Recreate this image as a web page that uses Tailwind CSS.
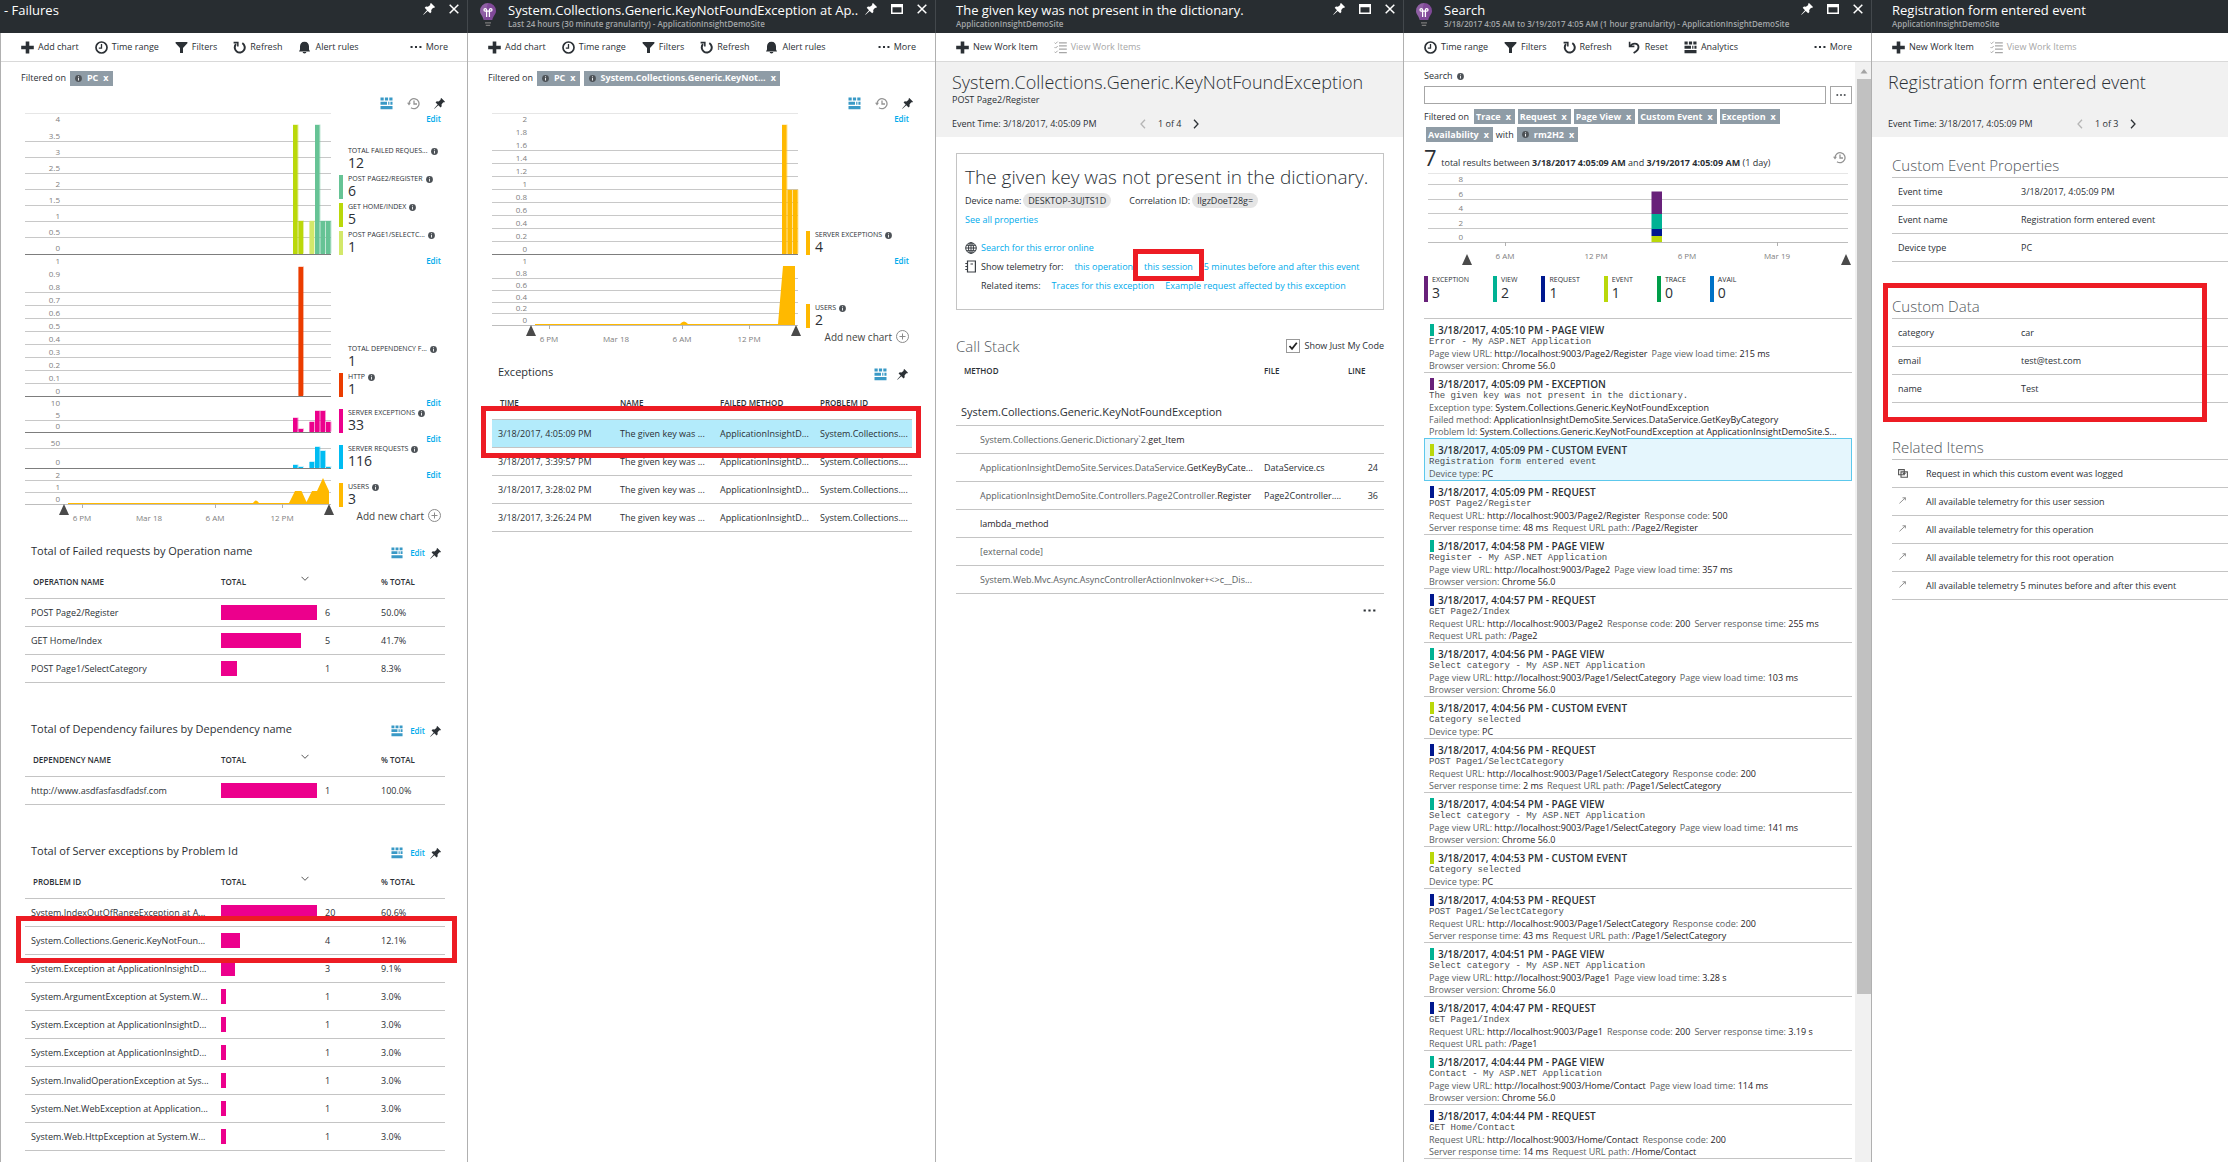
<!DOCTYPE html>
<html lang="en">
<head>
<meta charset="utf-8">
<title>Failures - ApplicationInsightDemoSite</title>
<script src="https://cdn.jsdelivr.net/npm/@tailwindcss/browser@4"></script>
</head>
<body class="bg-white font-['Open_Sans','Noto_Sans',sans-serif] text-[9px] leading-3 text-[#2b3035]">

<svg class="hidden" aria-hidden="true">
  <symbol id="pin" viewBox="0 0 12 12"><path fill="currentColor" d="M8 0L12 4L11 5L10.1 4.7L8.2 7.1L8.4 9L7.2 10.3L4.7 7.9L.6 11.8L.2 11.4L4 7.2L1.7 4.8L3 3.6L4.9 3.8L7.3 1.9L7 1Z"/></symbol>
  <symbol id="max" viewBox="0 0 12 10"><path fill="currentColor" fill-rule="evenodd" d="M0 0H12V10H0ZM1.5 3.2V8.5H10.5V3.2Z"/></symbol>
  <symbol id="close" viewBox="0 0 10 10"><path fill="none" stroke="currentColor" stroke-width="1.5" d="M.7 .7L9.3 9.3M9.3 .7L.7 9.3"/></symbol>
  <symbol id="bulb" viewBox="0 0 16 24"><path fill="#804998" d="M8 0a8 8 0 0 1 8 8c0 3.4-3 5-3.7 9H3.7C3 13 0 11.4 0 8a8 8 0 0 1 8-8z"/><path fill="#fff" fill-opacity=".12" d="M8 0a8 8 0 0 0-8 8c0 3.4 3 5 3.7 9z"/><path fill="none" stroke="#fff" stroke-width="1.3" d="M6.6 14V8.200M9.4 14V8.200M6.6 8.200H5.200a1.300 1.300 0 1 1 1.400-1.400zM9.4 8.200H10.800a1.300 1.300 0 1 0-1.400-1.400zM6.600 8.200H9.400"/><path fill="#7a7a7a" d="M5 19.200H11V20.500H5ZM5.800 21.800H10.200V23H5.800Z"/></symbol>
  <symbol id="plus" viewBox="0 0 13 13"><path fill="currentColor" d="M4.7 .5H8.3V4.7H12.8V8.3H8.3V12.5H4.7V8.3H.2V4.7H4.7Z"/></symbol>
  <symbol id="clock" viewBox="0 0 13 13"><circle cx="6.5" cy="6.5" r="5.5" fill="none" stroke="currentColor" stroke-width="1.7"/><path fill="none" stroke="currentColor" stroke-width="1.3" d="M6.5 3V7.2H3.8"/></symbol>
  <symbol id="filter" viewBox="0 0 13 13"><path fill="currentColor" d="M.6 1H12.4V2.3L8 7V12H5V7L.6 2.3Z"/></symbol>
  <symbol id="refresh" viewBox="0 0 13 13"><path fill="none" stroke="currentColor" stroke-width="2" d="M9.3 2.2A5 5 0 1 1 3 3.2"/><path fill="currentColor" d="M.6 .8H5.6V5.4H4.1V2.6H.6Z"/></symbol>
  <symbol id="bell" viewBox="0 0 13 13"><path fill="currentColor" d="M6.5 .7C9.6 .7 11 2.8 11 5.5V8.6L12 10.6H1L2 8.6V5.5C2 2.8 3.4 .7 6.5 .7ZM4.6 11H8.4A1.9 1.5 0 0 1 4.6 11Z"/></symbol>
  <symbol id="dots" viewBox="0 0 13 13"><path fill="currentColor" d="M.6 5.5H2.8V7.5H.6ZM5.4 5.5H7.6V7.5H5.4ZM10.2 5.5H12.4V7.5H10.2Z"/></symbol>
  <symbol id="reset" viewBox="0 0 13 13"><path fill="none" stroke="currentColor" stroke-width="1.9" d="M2.2 5.4C3.5 2 10.5 1.2 10.5 6C10.5 9 8.5 10.5 5.6 12"/><path fill="currentColor" d="M.8 .8H2.4V4.6H6.4V6.2H.8Z"/></symbol>
  <symbol id="grid" viewBox="0 0 13 13"><path fill="currentColor" d="M.5 .5H3.7V3.5H.5ZM4.9 .5H8.1V3.5H4.9ZM9.3 .5H12.5V3.5H9.3ZM.5 4.7H7V7.7H.5ZM8.2 4.7H9.4V7.7H8.2ZM10.4 4.7H12.5V7.7H10.4ZM.5 9H12.5V12.2H.5Z"/></symbol>
  <symbol id="list" viewBox="0 0 13 13"><path fill="none" stroke="currentColor" stroke-width="1.2" d="M5 1.8H12.8M5 4.8H12.8M5 8.2H12.8M5 11.7H12.8"/><path fill="none" stroke="currentColor" d="M.5 1.6L1.6 2.7L3.7 .6M.5 6L1.6 7.1L3.7 5M.5 10.7L1.6 11.8L3.7 9.7"/></symbol>
  <symbol id="info" viewBox="0 0 8 8"><circle cx="4" cy="4" r="3.9" fill="#4d5257"/><path stroke="#fff" stroke-width="1" d="M4 1.5V2.5M4 3.3V6.3"/></symbol>
  <symbol id="history" viewBox="0 0 13 13"><path fill="none" stroke="#949494" stroke-width="1.3" d="M2 6.5A5 5 0 1 1 4 10.7M7 3.5V7H10"/><path fill="#949494" d="M0 5.8H4L2 8.4Z"/></symbol>
  <symbol id="chev" viewBox="0 0 8 6"><path fill="none" stroke="#555" d="M.5 .8L4 4.3L7.5 .8"/></symbol>
  <symbol id="prev" viewBox="0 0 6 10"><path fill="none" stroke="currentColor" stroke-width="1.3" d="M5 .7L1 5L5 9.3"/></symbol>
  <symbol id="next" viewBox="0 0 6 10"><path fill="none" stroke="currentColor" stroke-width="1.3" d="M1 .7L5 5L1 9.3"/></symbol>
  <symbol id="addc" viewBox="0 0 13 13"><circle cx="6.5" cy="6.5" r="6" fill="none" stroke="#8a8a8a"/><path stroke="#8a8a8a" d="M6.5 3.5V9.5M3.5 6.5H9.5"/></symbol>
  <symbol id="globe" viewBox="0 0 12 12"><g fill="none" stroke="#3a3f44"><circle cx="6" cy="6" r="5.3"/><ellipse cx="6" cy="6" rx="2.5" ry="5.3"/><path d="M6 .7V11.3M.7 6H11.3M1.5 3.3H10.5M1.5 8.7H10.5"/></g></symbol>
  <symbol id="book" viewBox="0 0 12 13"><path fill="none" stroke="#3a3f44" stroke-width="1.2" d="M2.5 1H10.4V12H2.5ZM.3 3.5H3M.3 6.5H3M.3 9.5H3M5.5 4H8"/></symbol>
  <symbol id="copy" viewBox="0 0 10 9"><path fill="none" stroke="#555" stroke-width="1.1" d="M.6 .6H6.3V5.8H.6ZM3 2.9H9.4V8.3H3ZM4.8 4.5H7.6M6.2 3V6.3"/></symbol>
  <symbol id="arrow" viewBox="0 0 8 8"><path fill="none" stroke="#777" stroke-width=".9" d="M.5 7.3L7.3 .9M4 .9H7.3V3.8"/></symbol>
</svg>

<div class="grid min-h-screen grid-cols-[minmax(0,117fr)_minmax(0,117fr)_minmax(0,117fr)_minmax(0,117fr)_minmax(0,89fr)]">

  <!-- Failures -->
  <section class="flex flex-col">
    <header class="flex h-[33px] justify-between border-r border-[#43484c] bg-[#282d31] pr-2 pl-1 text-white">
      <h1 class="pt-0.5 text-[13px] leading-4">- Failures</h1>
      <div data-win="pin close"></div>
    </header>
    <div class="flex-1 border-x border-[#b0b0b0]">
      <div data-bar="plus:Add chart|clock:Time range|filter:Filters|refresh:Refresh|bell:Alert rules|more"></div>
      <div class="flex h-8 items-center gap-1 px-5"><span>Filtered on</span><span data-pill="i:PC"></span></div>
      <div data-tools></div>
      <div id="c1" class="pl-6 pr-[23px]"></div>
      <div data-axis></div>
      <div id="t1" class="flex flex-col gap-8 pl-6 pr-[22px]"></div>
    </div>
  </section>

  <!-- Exception metrics -->
  <section class="flex flex-col">
    <header class="flex h-[33px] justify-between border-r border-[#43484c] bg-[#282d31] pr-2 pl-3 text-white">
      <div class="flex min-w-0 gap-3">
        <svg class="mt-[3px] h-6 w-4 shrink-0"><use href="#bulb"/></svg>
        <div class="min-w-0 whitespace-nowrap pt-0.5">
          <h1 class="text-[13px] leading-4">System.Collections.Generic.KeyNotFoundException at Ap..</h1>
          <p class="text-[8px] font-semibold leading-3 text-[#a3a6a8]">Last 24 hours (30 minute granularity) - ApplicationInsightDemoSite</p>
        </div>
      </div>
      <div data-win="pin max close"></div>
    </header>
    <div class="flex-1 border-r border-[#b0b0b0]">
      <div data-bar="plus:Add chart|clock:Time range|filter:Filters|refresh:Refresh|bell:Alert rules|more"></div>
      <div class="flex h-8 items-center gap-1 px-5"><span>Filtered on</span><span data-pill="i:PC"></span><span data-pill="i:System.Collections.Generic.KeyNot..."></span></div>
      <div data-tools></div>
      <div id="c2" class="pl-6 pr-[23px]"></div>
      <div data-axis></div>
      <div class="pl-6 pr-[23px]">
        <div class="flex h-7 items-center justify-between pl-1.5 pr-1">
          <h2 class="text-[11px] leading-4">Exceptions</h2>
          <div class="flex items-center gap-2.5 pt-1">
            <button aria-label="Grid" class="text-[#3999c6]"><svg class="size-[13px]"><use href="#grid"/></svg></button>
            <button aria-label="Pin"><svg class="size-[11px]"><use href="#pin"/></svg></button>
          </div>
        </div>
        <table class="w-full table-fixed border-separate border-spacing-0 text-left">
          <colgroup><col class="w-[128px]"><col class="w-[100px]"><col class="w-[100px]"><col></colgroup>
          <thead><tr class="h-[34px] text-[8px] font-semibold"><th class="border-b border-[#c4c4c4] pl-2 font-semibold">TIME</th><th class="border-b border-[#c4c4c4] font-semibold">NAME</th><th class="border-b border-[#c4c4c4] font-semibold">FAILED METHOD</th><th class="border-b border-[#c4c4c4] font-semibold">PROBLEM ID</th></tr></thead>
          <tbody id="ex"></tbody>
        </table>
      </div>
    </div>
  </section>

  <!-- Exception details -->
  <section class="flex flex-col">
    <header class="flex h-[33px] justify-between border-r border-[#43484c] bg-[#282d31] pr-2 pl-5 text-white">
      <div class="whitespace-nowrap pt-0.5">
        <h1 class="text-[13px] leading-4">The given key was not present in the dictionary.</h1>
        <p class="text-[8px] font-semibold leading-3 text-[#a3a6a8]">ApplicationInsightDemoSite</p>
      </div>
      <div data-win="pin max close"></div>
    </header>
    <div class="flex-1 border-r border-[#b0b0b0]">
      <div data-bar="plus:New Work Item|list:View Work Items"></div>
      <div class="h-[75px] bg-[#f1f1f1] pl-4 pt-2">
        <h2 class="text-[18px] font-light leading-6 whitespace-nowrap">System.Collections.Generic.KeyNotFoundException</h2>
        <p>POST Page2/Register</p>
        <div class="mt-3 flex items-center"><span class="w-[188px]">Event Time: 3/18/2017, 4:05:09 PM</span>
          <button aria-label="Previous" class="text-[#b5b5b5]"><svg class="h-2.5 w-1.5"><use href="#prev"/></svg></button><span class="mx-3">1 of 4</span><button aria-label="Next"><svg class="h-2.5 w-1.5"><use href="#next"/></svg></button></div>
      </div>
      <div class="pl-5 pr-[19px] pt-4">
        <article class="h-[157px] border border-[#c4c4c4] px-2 pt-[11px] whitespace-nowrap">
          <h3 class="text-[19px] font-light leading-6">The given key was not present in the dictionary.</h3>
          <div class="mt-1 flex items-center gap-0.5 leading-[15px]"><span>Device name:</span><span class="rounded-full bg-[#e5e5e5] px-[5px]">DESKTOP-3UJTS1D</span><span class="ml-4">Correlation ID:</span><span class="rounded-full bg-[#e5e5e5] px-[5px]">llgzDoeT28g=</span></div>
          <p class="mt-0.5 leading-[19px]"><a href="#" class="text-[#00abec]">See all properties</a></p>
          <div class="mt-[9px] grid grid-cols-[12px_1fr] items-center gap-x-1 leading-[19px]">
            <svg class="size-3"><use href="#globe"/></svg><a href="#" class="text-[#00abec]">Search for this error online</a>
            <svg class="h-[13px] w-3"><use href="#book"/></svg>
            <div class="flex gap-[11px]"><span>Show telemetry for:</span><a href="#" class="text-[#00abec]">this operation</a><span class="relative"><a href="#" class="text-[#00abec]">this session</a><span class="pointer-events-none absolute -inset-x-[11px] -top-2 -bottom-[5px] border-5 border-[#ed1c24]"></span></span><a href="#" class="text-[#00abec]">5 minutes before and after this event</a></div>
            <div class="col-start-2 flex gap-[11px]"><span>Related items:</span><a href="#" class="text-[#00abec]">Traces for this exception</a><a href="#" class="text-[#00abec]">Example request affected by this exception</a></div>
          </div>
        </article>
        <div class="mt-6 flex h-6 items-center justify-between">
          <h3 class="text-[15px] font-light leading-5 text-[#50555a]">Call Stack</h3>
          <label class="flex items-center gap-1"><span class="relative flex"><input type="checkbox" checked class="size-3.5 appearance-none border border-[#999]"><svg viewBox="0 0 14 14" class="pointer-events-none absolute inset-0 size-3.5"><path d="M3.5 7L6 9.8L10.8 3.8" fill="none" stroke="#222" stroke-width="1.8"/></svg></span>Show Just My Code</label>
        </div>
        <table class="w-full table-fixed border-separate border-spacing-0 text-left">
          <colgroup><col><col class="w-[84px]"><col class="w-[36px]"></colgroup>
          <thead><tr class="h-[26px] text-[8px]"><th class="pl-2 font-semibold">METHOD</th><th class="font-semibold">FILE</th><th class="font-semibold">LINE</th></tr></thead>
          <tbody id="cs"></tbody>
        </table>
        <div class="flex justify-end pr-2 pt-2.5"><button aria-label="More frames"><svg class="size-[13px]"><use href="#dots"/></svg></button></div>
      </div>
    </div>
  </section>

  <!-- Search -->
  <section class="flex flex-col">
    <header class="flex h-[33px] justify-between border-r border-[#43484c] bg-[#282d31] pr-2 pl-3 text-white">
      <div class="flex gap-3">
        <svg class="mt-[3px] h-6 w-4 shrink-0"><use href="#bulb"/></svg>
        <div class="whitespace-nowrap pt-0.5">
          <h1 class="text-[13px] leading-4">Search</h1>
          <p class="text-[8px] font-semibold leading-3 text-[#a3a6a8]">3/18/2017 4:05 AM to 3/19/2017 4:05 AM (1 hour granularity) - ApplicationInsightDemoSite</p>
        </div>
      </div>
      <div data-win="pin max close"></div>
    </header>
    <div class="flex flex-1 flex-col border-r border-[#b0b0b0]">
      <div data-bar="clock:Time range|filter:Filters|refresh:Refresh|reset:Reset|grid:Analytics|more"></div>
      <div class="flex flex-1">
        <div class="min-w-0 flex-1 pl-5 pr-[3px] pt-2">
          <label for="q" class="flex items-center gap-1">Search <svg class="size-[7px]"><use href="#info"/></svg></label>
          <div class="mt-1 flex gap-1">
            <input id="q" type="text" class="h-[18px] min-w-0 flex-1 border border-[#a6a6a6] px-1">
            <button aria-label="Browse" class="flex h-[18px] w-[22px] items-center justify-center border border-[#a6a6a6]"><svg class="size-2.5"><use href="#dots"/></svg></button>
          </div>
          <div class="mt-[5px] flex flex-wrap items-center gap-x-[3px] gap-y-[3px] leading-[15px]">
            <span class="mr-0.5">Filtered on</span><span data-pill="Trace"></span><span data-pill="Request"></span><span data-pill="Page View"></span><span data-pill="Custom Event"></span><span data-pill="Exception"></span>
            <span class="basis-full"></span>
            <span class="-mt-[3px] ml-0.5 flex gap-[3px]"><span data-pill="Availability"></span>with<span data-pill="i:rm2H2"></span></span>
          </div>
          <div class="mt-1 flex h-[27px] items-center justify-between pb-1 pr-1.5">
            <p class="whitespace-nowrap"><span class="text-[22px] leading-[22px]">7</span>&nbsp; total results between <b class="font-bold">3/18/2017 4:05:09 AM</b> and <b class="font-bold">3/19/2017 4:05:09 AM</b> (1 day)</p>
            <button aria-label="Reset time range"><svg class="size-[13px]"><use href="#history"/></svg></button>
          </div>
          <div id="c4" class="px-1"></div>
          <ul id="lg" class="flex gap-6"></ul>
          <ul id="ev" class="mt-4 border-t border-[#c4c4c4]"></ul>
        </div>
        <div class="flex w-4 flex-col items-center bg-[#f1f1f1] pl-0.5">
          <svg viewBox="0 0 8 17" class="h-[17px] w-2"><path d="M.5 11.5L4 7L7.5 11.5Z" fill="#a3a3a3"/></svg>
          <div class="h-[915px] w-full bg-[#c1c1c1]"></div>
        </div>
      </div>
    </div>
  </section>

  <!-- Custom event -->
  <section class="flex flex-col">
    <header class="h-[33px] bg-[#282d31] pl-5 pt-0.5 text-white">
      <h1 class="text-[13px] leading-4">Registration form entered event</h1>
      <p class="text-[8px] font-semibold leading-3 text-[#a3a6a8]">ApplicationInsightDemoSite</p>
    </header>
    <div data-bar="plus:New Work Item|list:View Work Items"></div>
    <div class="h-[75px] bg-[#f1f1f1] pl-4 pt-2">
      <h2 class="text-[18px] font-light leading-6">Registration form entered event</h2>
      <div class="mt-6 flex items-center"><span class="w-[189px]">Event Time: 3/18/2017, 4:05:09 PM</span>
        <button aria-label="Previous" class="text-[#b5b5b5]"><svg class="h-2.5 w-1.5"><use href="#prev"/></svg></button><span class="mx-3">1 of 3</span><button aria-label="Next"><svg class="h-2.5 w-1.5"><use href="#next"/></svg></button></div>
    </div>
    <div class="flex flex-col gap-8 pl-5 pt-4">
      <section>
        <h3 class="h-[25px] border-b border-[#c4c4c4] text-[15px] font-light leading-6 text-[#50555a]">Custom Event Properties</h3>
        <div data-props="Event time=3/18/2017, 4:05:09 PM|Event name=Registration form entered event|Device type=PC"></div>
      </section>
      <section class="relative">
        <h3 class="h-[25px] border-b border-[#c4c4c4] text-[15px] font-light leading-6 text-[#50555a]">Custom Data</h3>
        <div data-props="category=car|email=test@test.com|name=Test"></div>
        <div class="pointer-events-none absolute -top-[11px] -bottom-[19px] -left-[9px] right-[21px] border-5 border-[#ed1c24]"></div>
      </section>
      <section>
        <h3 class="h-[25px] border-b border-[#c4c4c4] text-[15px] font-light leading-6 text-[#50555a]">Related Items</h3>
        <ul id="rel"></ul>
      </section>
    </div>
  </section>
</div>

<script>
const $ = s => document.querySelector(s), all = s => document.querySelectorAll(s);
const red = c => `<div class="pointer-events-none absolute z-10 border-5 border-[#ed1c24] ${c}"></div>`;

// Window buttons, command bars, pills
const winIcons = {pin:'<button aria-label="Pin"><svg class="size-3"><use href="#pin"/></svg></button>', max:'<button aria-label="Maximize"><svg class="h-2.5 w-3"><use href="#max"/></svg></button>', close:'<button aria-label="Close"><svg class="size-2.5"><use href="#close"/></svg></button>'};
all('[data-win]').forEach(e => { e.className = 'flex h-[18px] shrink-0 items-center gap-3.5'; e.innerHTML = e.dataset.win.split(' ').map(k => winIcons[k]).join(''); });
all('[data-bar]').forEach(e => {
  e.className = 'flex h-[29px] shrink-0 items-center gap-4 whitespace-nowrap border-b border-[#d9d9d9] pl-5 pr-[19px]';
  e.innerHTML = e.dataset.bar.split('|').map(t => {
    if (t === 'more') return '<button class="ml-auto flex items-center gap-1"><svg class="size-3"><use href="#dots"/></svg>More</button>';
    const [i, n] = t.split(':');
    return `<button ${i === 'list' ? 'disabled' : ''} class="flex items-center gap-1 disabled:text-[#a6a6a6]"><svg class="size-[13px]"><use href="#${i}"/></svg>${n}</button>`;
  }).join('');
});
all('[data-pill]').forEach(e => {
  const info = e.dataset.pill.startsWith('i:'), n = e.dataset.pill.replace('i:', '');
  e.className = (info ? 'pl-[5px] ' : 'pl-0.5 ') + 'flex h-[15px] items-center gap-[5px] bg-[#8f9ca6] pr-1 font-bold text-white';
  e.innerHTML = (info ? '<svg class="size-[7px]"><use href="#info"/></svg>' : '') + `${n}<button aria-label="Remove ${n}" class="font-bold">x</button>`;
});
all('[data-tools]').forEach(e => {
  e.className = 'flex h-[19px] items-center justify-end gap-3.5 pr-[22px]';
  e.innerHTML = '<button aria-label="Grid" class="text-[#3999c6]"><svg class="size-[13px]"><use href="#grid"/></svg></button><button aria-label="Reset time"><svg class="size-[13px]"><use href="#history"/></svg></button><button aria-label="Pin"><svg class="size-[11px]"><use href="#pin"/></svg></button>';
});
all('[data-axis]').forEach(e => {
  e.className = 'relative flex h-[30px] justify-end pr-[26px] pt-0.5';
  e.innerHTML = '<button class="flex h-[13px] items-center gap-1 text-[10px] text-[#444]">Add new chart <svg class="size-[13px]"><use href="#addc"/></svg></button>';
});

// Charts
const txt = (x, y, t, a = 'middle') => `<text x="${x}" y="${y + 3}" text-anchor="${a}" class="fill-[#808080] text-[8px]">${t}</text>`;
const tri = (x, y) => `<path d="M${x} ${y}L${x + 5} ${y + 11}H${x - 5}Z" fill="#4a4a4a"/>`;
function svg(o) {
  const w = o.w || 306;
  let s = o.top ? `<rect width="${w}" height="1" fill="#e6e6e6"/>` : '';
  o.lines.forEach(y => s += `<rect y="${y}" width="${w}" height="1" fill="#c8c8c8"/>`);
  o.labels.forEach(([t, y]) => s += txt(35, y, t, 'end'));
  (o.bars || []).forEach(([x, y, c]) => s += `<rect x="${x}" y="${y - .5}" width="5.5" height="${o.base - y}" fill="${c}" opacity=".4"/><rect x="${x}" y="${y}" width="4.5" height="${o.base - y}" fill="${c}"/>`);
  (o.stack || []).forEach(([y, h, c]) => s += `<rect x="223.5" y="${y}" width="10.5" height="${h}" fill="${c}"/>`);
  if (o.area) s += `<path d="${o.area}" fill="#ffb900"/>`;
  s += `<rect y="${o.base}" width="${w}" height="1" fill="${o.axis ? '#bdbdbd' : '#7d7d7d'}"/>`;
  (o.axis || []).forEach(([x, t, k]) => s += (k ? `<rect x="${x}" y="${o.base}" width="1" height="4" fill="#b0b0b0"/>` : '') + txt(x, o.base + 14, t));
  (o.marks || []).forEach(x => s += tri(x, o.base + (o.mo || 0)));
  return `<svg class="shrink-0 overflow-visible" width="${w}" height="${o.h}">${s}</svg>`;
}
const lg = ([n, v, c]) => `<div class="flex h-6 gap-[5px]"><span class="w-1" style="background:${c || 'transparent'}"></span><div><div class="flex h-2 items-center gap-[3px] whitespace-nowrap text-[7px]">${n}<svg class="size-[7px]"><use href="#info"/></svg></div><div class="text-[14px] leading-4">${v}</div></div></div>`;
const row = o => `<div class="flex gap-2" style="height:${o.h}px">${svg(o)}<div class="flex min-w-0 flex-1 flex-col justify-between"><a href="#" class="self-end pr-[3px] text-[8px] font-semibold leading-3 text-[#00abec]">Edit</a><div class="flex flex-col gap-1">${o.legend.map(lg).join('')}</div></div></div>`;
const seq = (n, y0, d) => Array.from({length: n}, (_, i) => y0 + i * d);
const axis = [[57, '6 PM', 1], [124, 'Mar 18'], [190, '6 AM', 1], [257, '12 PM', 1]];
const G = '#bad80a', T = '#66c395', L = '#d3e86a', P = '#ec008c', B = '#00bcf2';
$('#c1').innerHTML = [
  {h: 142, top: 1, base: 141, lines: seq(7, 28, 16), labels: [['4', 6], ['3.5', 23], ['3', 39], ['2.5', 55], ['2', 71], ['1.5', 87], ['1', 103], ['0.5', 119], ['0', 135]],
    bars: [[268, 12, G], [273.5, 108, G], [284.5, 108, L], [290, 12, T], [295.5, 108, T], [301, 108, T]],
    legend: [['TOTAL FAILED REQUES...', 12], ['POST PAGE2/REGISTER', 6, T], ['GET HOME/INDEX', 5, G], ['POST PAGE1/SELECTC...', 1, L]]},
  {h: 142, base: 141, lines: seq(8, 37, 13), labels: ['1', '0.9', '0.8', '0.7', '0.6', '0.5', '0.4', '0.3', '0.2', '0.1', '0'].map((t, i) => [t, 6 + i * 13]),
    bars: [[273.5, 12, '#eb3c00']], legend: [['TOTAL DEPENDENCY F...', 1], ['HTTP', 1, '#eb3c00']]},
  {h: 36, base: 35, lines: [23], labels: [['10', 6], ['5', 18], ['0', 29]], bars: [[268, 21, P], [273.5, 32, P], [284.5, 25, P], [290, 14, P], [295.5, 14, P], [301, 25, P]], legend: [['SERVER EXCEPTIONS', 33, P]]},
  {h: 36, base: 35, lines: [15], labels: [['50', 10], ['0', 29]], bars: [[268, 32, B], [273.5, 34, B], [284.5, 29, B], [290, 14, B], [295.5, 18, B], [301, 34, B]], legend: [['SERVER REQUESTS', 116, B]]},
  {h: 38, base: 35, lines: [11, 23], labels: [['2', 6], ['1', 18], ['0', 30]], axis, marks: [39, 304],
    area: 'M43 35V34H228Q231 29 234 34H264L270 22H276.5L281.5 33L287 22H292L298 9L304 22V35Z', legend: [['USERS', 3, '#ffb900']]}
].map(row).join('');
$('#c2').innerHTML = [
  {h: 142, top: 1, base: 141, lines: seq(8, 37, 13), labels: ['2', '1.8', '1.6', '1.4', '1.2', '1', '0.8', '0.6', '0.4', '0.2', '0'].map((t, i) => [t, 6 + i * 13]),
    bars: [[290, 12, '#ffb900'], [295.5, 77, '#ffb900'], [301, 77, '#ffb900']], legend: [['SERVER EXCEPTIONS', 4, '#ffb900']]},
  {h: 73, base: 70, lines: [23, 35, 47, 58], labels: [['1', 6], ['0.8', 18], ['0.6', 30], ['0.4', 42], ['0.2', 53], ['0', 65]], axis, marks: [39, 304],
    area: 'M43 70V69H188Q192 64 196 69H286L291 11H303V70Z', legend: [['USERS', 2, '#ffb900']]}
].map(row).join('');
$('#c4').innerHTML = svg({w: 420, h: 103, top: 1, base: 69, lines: [11, 26, 40, 55], labels: [['8', 6], ['6', 21], ['4', 35], ['2', 50], ['0', 64]],
  stack: [[18.5, 22.5, '#68217a'], [41, 15, '#00b294'], [56, 7, '#00188f'], [63, 6, G]],
  axis: [[77, '6 AM', 1], [168, '12 PM'], [259, '6 PM'], [349, 'Mar 19', 1]], marks: [39, 418], mo: 12});
$('#lg').innerHTML = [['EXCEPTION', 3, '#68217a'], ['VIEW', 2, '#00b294'], ['REQUEST', 1, '#00188f'], ['EVENT', 1, G], ['TRACE', 0, '#009e49'], ['AVAIL', 0, '#0072c6']]
  .map(([n, v, c]) => `<li class="flex h-[26px] gap-1"><span class="w-1" style="background:${c}"></span><div><div class="text-[7px] leading-2">${n}</div><div class="text-[14px] leading-[18px]">${v}</div></div></li>`).join('');

// Breakdown tables
const tables = [
  ['Total of Failed requests by Operation name', 'OPERATION NAME', [['POST Page2/Register', 6, '50.0%'], ['GET Home/Index', 5, '41.7%'], ['POST Page1/SelectCategory', 1, '8.3%']]],
  ['Total of Dependency failures by Dependency name', 'DEPENDENCY NAME', [['http://www.asdfasfasdfadsf.com', 1, '100.0%']]],
  ['Total of Server exceptions by Problem Id', 'PROBLEM ID', [['System.IndexOutOfRangeException at A...', 20, '60.6%'], ['System.Collections.Generic.KeyNotFoun...', 4, '12.1%'], ['System.Exception at ApplicationInsightD...', 3, '9.1%'], ['System.ArgumentException at System.W...', 1, '3.0%'], ['System.Exception at ApplicationInsightD...', 1, '3.0%'], ['System.Exception at ApplicationInsightD...', 1, '3.0%'], ['System.InvalidOperationException at Sys...', 1, '3.0%'], ['System.Net.WebException at Application...', 1, '3.0%'], ['System.Web.HttpException at System.W...', 1, '3.0%']]]
];
$('#t1').innerHTML = tables.map(([t, h, rows]) => `<section>
  <div class="flex h-7 items-center justify-between pl-1.5 pr-1"><h2 class="text-[11px] leading-4">${t}</h2>
    <div class="flex items-center gap-[5px] pt-1"><button aria-label="Grid" class="mr-0.5 text-[#3999c6]"><svg class="size-3"><use href="#grid"/></svg></button><a href="#" class="text-[8px] font-semibold text-[#00abec]">Edit</a><button aria-label="Pin"><svg class="size-[11px]"><use href="#pin"/></svg></button></div></div>
  <table class="w-full table-fixed border-separate border-spacing-0 text-left">
    <colgroup><col class="w-[196px]"><col class="w-[104px]"><col class="w-[56px]"><col></colgroup>
    <thead><tr class="h-[34px] text-[8px]"><th class="border-b border-[#c4c4c4] pl-2 font-semibold">${h}</th><th class="border-b border-[#c4c4c4] font-semibold"><div class="flex w-[88px] justify-between">TOTAL<svg class="h-1.5 w-2"><use href="#chev"/></svg></div></th><th class="border-b border-[#c4c4c4]"></th><th class="border-b border-[#c4c4c4] font-semibold">% TOTAL</th></tr></thead>
    <tbody>${rows.map(([n, v, p]) => `<tr class="relative h-7"><td class="border-b border-[#c4c4c4] pl-1.5"><div class="whitespace-nowrap">${n}</div>${v === 4 ? red('-top-[11px] -bottom-2 -left-[9px] -right-3') : ''}</td><td class="border-b border-[#c4c4c4]"><div class="h-[15px] bg-[#ec008c]" style="width:${Math.round(96 * v / rows[0][1])}px"></div></td><td class="border-b border-[#c4c4c4]">${v}</td><td class="border-b border-[#c4c4c4]">${p}</td></tr>`).join('')}</tbody>
  </table></section>`).join('');
$('#ex').innerHTML = ['4:05:09', '3:39:57', '3:28:02', '3:26:24'].map((t, i) => `<tr class="relative h-7 whitespace-nowrap ${i ? '' : 'bg-[#b3ebfb]'}"><td class="border-b border-[#c4c4c4] pl-1.5">3/18/2017, ${t} PM${i ? '' : red('-top-3.5 -bottom-2.5 -left-[11px] -right-[9px]')}</td><td class="border-b border-[#c4c4c4]">The given key was ...</td><td class="border-b border-[#c4c4c4]">ApplicationInsightD...</td><td class="border-b border-[#c4c4c4]">System.Collections....</td></tr>`).join('');

// Call stack
const frames = [['System.Collections.Generic.Dictionary`2.', 'get_Item', '', ''], ['ApplicationInsightDemoSite.Services.DataService.', 'GetKeyByCate...', 'DataService.cs', 24], ['ApplicationInsightDemoSite.Controllers.Page2Controller.', 'Register', 'Page2Controller....', 36], ['', 'lambda_method', '', ''], ['[external code]', '', '', ''], ['System.Web.Mvc.Async.AsyncControllerActionInvoker+&lt;&gt;c__Dis...', '', '', '']];
$('#cs').innerHTML = '<tr class="h-[42px]"><td colspan="3" class="border-b border-[#c4c4c4] pb-[5px] pl-[5px] align-bottom text-[11px] leading-4">System.Collections.Generic.KeyNotFoundException</td></tr>' +
  frames.map(([a, b, f, l]) => `<tr class="h-7 whitespace-nowrap"><td class="border-b border-[#c4c4c4] pl-6 text-[#5a5e62]">${a}<span class="text-[#1f2226]">${b}</span></td><td class="border-b border-[#c4c4c4]">${f}</td><td class="border-b border-[#c4c4c4] pr-1.5 text-right">${l}</td></tr>`).join('');

// Search results
const U = 'http://localhost:9003';
const pv = (t, n, u, ms) => [t, 'PAGE VIEW', n, [[['Page view URL', U + u], ['Page view load time', ms]], [['Browser version', 'Chrome 56.0']]]];
const rq = (t, n, u, code, ms, wide) => [t, 'REQUEST', n, wide ? [[['Request URL', U + u], ['Response code', code], ['Server response time', ms]], [['Request URL path', u]]] : [[['Request URL', U + u], ['Response code', code]], [['Server response time', ms], ['Request URL path', u]]]];
const ce = (t, n) => [t, 'CUSTOM EVENT', n, [[['Device type', 'PC']]]];
const colors = {'PAGE VIEW': '#00b294', 'EXCEPTION': '#68217a', 'CUSTOM EVENT': G, 'REQUEST': '#00188f'};
$('#ev').innerHTML = [
  pv('4:05:10', 'Error - My ASP.NET Application', '/Page2/Register', '215 ms'),
  ['4:05:09', 'EXCEPTION', 'The given key was not present in the dictionary.', [[['Exception type', 'System.Collections.Generic.KeyNotFoundException']], [['Failed method', 'ApplicationInsightDemoSite.Services.DataService.GetKeyByCategory']], [['Problem Id', 'System.Collections.Generic.KeyNotFoundException at ApplicationInsightDemoSite.S...']]]],
  ce('4:05:09', 'Registration form entered event'),
  rq('4:05:09', 'POST Page2/Register', '/Page2/Register', 500, '48 ms'),
  pv('4:04:58', 'Register - My ASP.NET Application', '/Page2', '357 ms'),
  rq('4:04:57', 'GET Page2/Index', '/Page2', 200, '255 ms', 1),
  pv('4:04:56', 'Select category - My ASP.NET Application', '/Page1/SelectCategory', '103 ms'),
  ce('4:04:56', 'Category selected'),
  rq('4:04:56', 'POST Page1/SelectCategory', '/Page1/SelectCategory', 200, '2 ms'),
  pv('4:04:54', 'Select category - My ASP.NET Application', '/Page1/SelectCategory', '141 ms'),
  ce('4:04:53', 'Category selected'),
  rq('4:04:53', 'POST Page1/SelectCategory', '/Page1/SelectCategory', 200, '43 ms'),
  pv('4:04:51', 'Select category - My ASP.NET Application', '/Page1', '3.28 s'),
  rq('4:04:47', 'GET Page1/Index', '/Page1', 200, '3.19 s', 1),
  pv('4:04:44', 'Contact - My ASP.NET Application', '/Home/Contact', '114 ms'),
  rq('4:04:44', 'GET Home/Contact', '/Home/Contact', 200, '14 ms')
].map(([t, k, n, lines], i) => `<li class="whitespace-nowrap ${i === 2 ? '-mt-px border border-[#5cc8ec] bg-[#e5f6fd] pl-1 pt-[5px]' : 'border-b border-[#c4c4c4] pl-[5px] pt-[5px]'}">
  <div class="flex items-center gap-1 pl-px text-[10px] font-semibold leading-3"><span class="h-3 w-1" style="background:${colors[k]}"></span>3/18/2017, ${t} PM - ${k}</div>
  <div class="font-['Liberation_Mono',monospace] text-[#4a4e52]">${n}</div>
  ${lines.map(l => `<div class="flex gap-1">${l.map(([a, b]) => `<span class="text-[#5a5e62]">${a}: <span class="text-[#1f2226]">${b}</span></span>`).join('')}</div>`).join('')}</li>`).join('');

// Custom event properties and links
all('[data-props]').forEach(e => e.outerHTML = `<dl>${e.dataset.props.split('|').map(p => { const [a, b] = p.split('='); return `<div class="flex h-7 items-center border-b border-[#c4c4c4] pl-1.5"><dt class="w-[123px]">${a}</dt><dd>${b}</dd></div>`; }).join('')}</dl>`);
$('#rel').innerHTML = ['Request in which this custom event was logged', 'All available telemetry for this user session', 'All available telemetry for this operation', 'All available telemetry for this root operation', 'All available telemetry 5 minutes before and after this event']
  .map((t, i) => `<li class="flex h-7 items-center border-b border-[#c4c4c4] pl-1.5"><span class="w-7">${i ? '<svg class="mb-0.5 ml-px size-[7px]"><use href="#arrow"/></svg>' : '<svg class="h-[9px] w-2.5"><use href="#copy"/></svg>'}</span><a href="#">${t}</a></li>`).join('');
</script>
</body>
</html>
